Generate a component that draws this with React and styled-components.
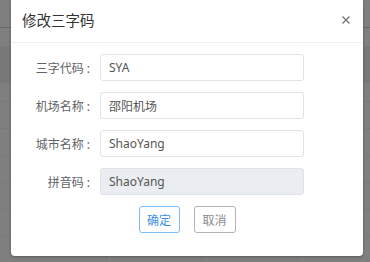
import React from 'react';
import styled, { createGlobalStyle } from 'styled-components';

const GlobalStyle = createGlobalStyle`
  html, body {
    margin: 0;
    padding: 0;
    width: 370px;
    height: 262px;
    overflow: hidden;
    background: #ffffff;
    font-family: "Noto Sans", "Noto Sans CJK SC", sans-serif;
  }
`;

const Page = styled.div`
  width: 370px;
  height: 262px;
  position: relative;
  overflow: hidden;
`;

const Table = styled.div`
  display: flex;
  flex-direction: column;
`;

const TableRow = styled.div`
  display: grid;
  grid-template-columns: 107px 95px 96px 1fr;
  height: ${(p) => p.$h}px;
  box-sizing: border-box;
  border-bottom: 1px solid ${(p) => (p.$head ? '#d0d4da' : '#f1f2f4')};
  background: ${(p) => (p.$hl ? '#f0f1f3' : '#ffffff')};
`;

const TableCell = styled.div`
  border-right: 1px solid #f1f2f4;
`;

const Overlay = styled.div`
  position: absolute;
  inset: 0;
  background: rgba(0, 0, 0, 0.5);
`;

const Dialog = styled.div`
  position: absolute;
  left: 11px;
  top: 0;
  width: 352px;
  height: 256px;
  background: #ffffff;
  border-radius: 0 0 4px 4px;
  box-shadow: 0 1px 3px rgba(0, 0, 0, 0.3);
  display: flex;
  flex-direction: column;
`;

const Header = styled.div`
  height: 43px;
  box-sizing: border-box;
  border-bottom: 1px solid #eef0f2;
  display: flex;
  align-items: center;
  justify-content: space-between;
  padding: 0 13px 2px 11px;
`;

const Title = styled.div`
  font-size: 14.5px;
  color: #333333;
  line-height: 20px;
`;

const Close = styled.button`
  border: none;
  background: none;
  padding: 0;
  width: 8px;
  height: 8px;
  display: flex;
  cursor: pointer;
`;

const Body = styled.div`
  padding-top: 11px;
  display: flex;
  flex-direction: column;
  gap: 11px;
`;

const Row = styled.div`
  display: flex;
  align-items: center;
`;

const Label = styled.label`
  width: 89px;
  box-sizing: border-box;
  padding-right: 10px;
  text-align: right;
  font-size: 12px;
  color: #5f6266;
  white-space: nowrap;
`;

const Colon = styled.span`
  margin-left: 3px;
`;

const Input = styled.input`
  width: 204px;
  height: 27px;
  box-sizing: border-box;
  border: 1px solid #dfe2e7;
  border-radius: 3px;
  padding: 0 8px;
  font-family: inherit;
  font-size: 12px;
  color: #555555;
  background: ${(p) => (p.disabled ? '#eaedf1' : '#ffffff')};
  outline: none;
`;

const Footer = styled.div`
  display: flex;
  justify-content: center;
  gap: 14px;
`;

const Button = styled.button`
  height: 27px;
  width: ${(p) => p.$w}px;
  box-sizing: border-box;
  border-radius: 3px;
  border: 1px solid ${(p) => (p.$primary ? '#7fbcf7' : '#b3b3b3')};
  background: #ffffff;
  color: ${(p) => (p.$primary ? '#3c8fe8' : '#8a8a8a')};
  font-family: inherit;
  font-size: 12px;
  padding: 0;
  cursor: pointer;
`;

const rows = [
  { h: 28, head: true },
  { h: 19 },
  { h: 36, hl: true },
  { h: 19 },
  { h: 27 },
  { h: 27 },
  { h: 27 },
  { h: 27 },
  { h: 27 },
  { h: 27 },
];

const fields = [
  { label: '三字代码', value: 'SYA' },
  { label: '机场名称', value: '邵阳机场' },
  { label: '城市名称', value: 'ShaoYang' },
  { label: '拼音码', value: 'ShaoYang', disabled: true },
];

const App = () => (
  <Page>
    <GlobalStyle />
    <Table>
      {rows.map((r, i) => (
        <TableRow key={i} $h={r.h} $head={r.head} $hl={r.hl}>
          <TableCell />
          <TableCell />
          <TableCell />
          <div />
        </TableRow>
      ))}
    </Table>
    <Overlay />
    <Dialog>
      <Header>
        <Title>修改三字码</Title>
        <Close aria-label="关闭">
          <svg width="8" height="8" viewBox="0 0 8 8">
            <path d="M0.5 0.5 L7.5 7.5 M7.5 0.5 L0.5 7.5" stroke="#777" strokeWidth="1.4" />
          </svg>
        </Close>
      </Header>
      <Body>
        {fields.map((f) => (
          <Row key={f.label}>
            <Label>
              {f.label}
              <Colon>:</Colon>
            </Label>
            <Input defaultValue={f.value} disabled={f.disabled} />
          </Row>
        ))}
        <Footer>
          <Button $primary $w={41}>确定</Button>
          <Button $w={42}>取消</Button>
        </Footer>
      </Body>
    </Dialog>
  </Page>
);

export default App;
